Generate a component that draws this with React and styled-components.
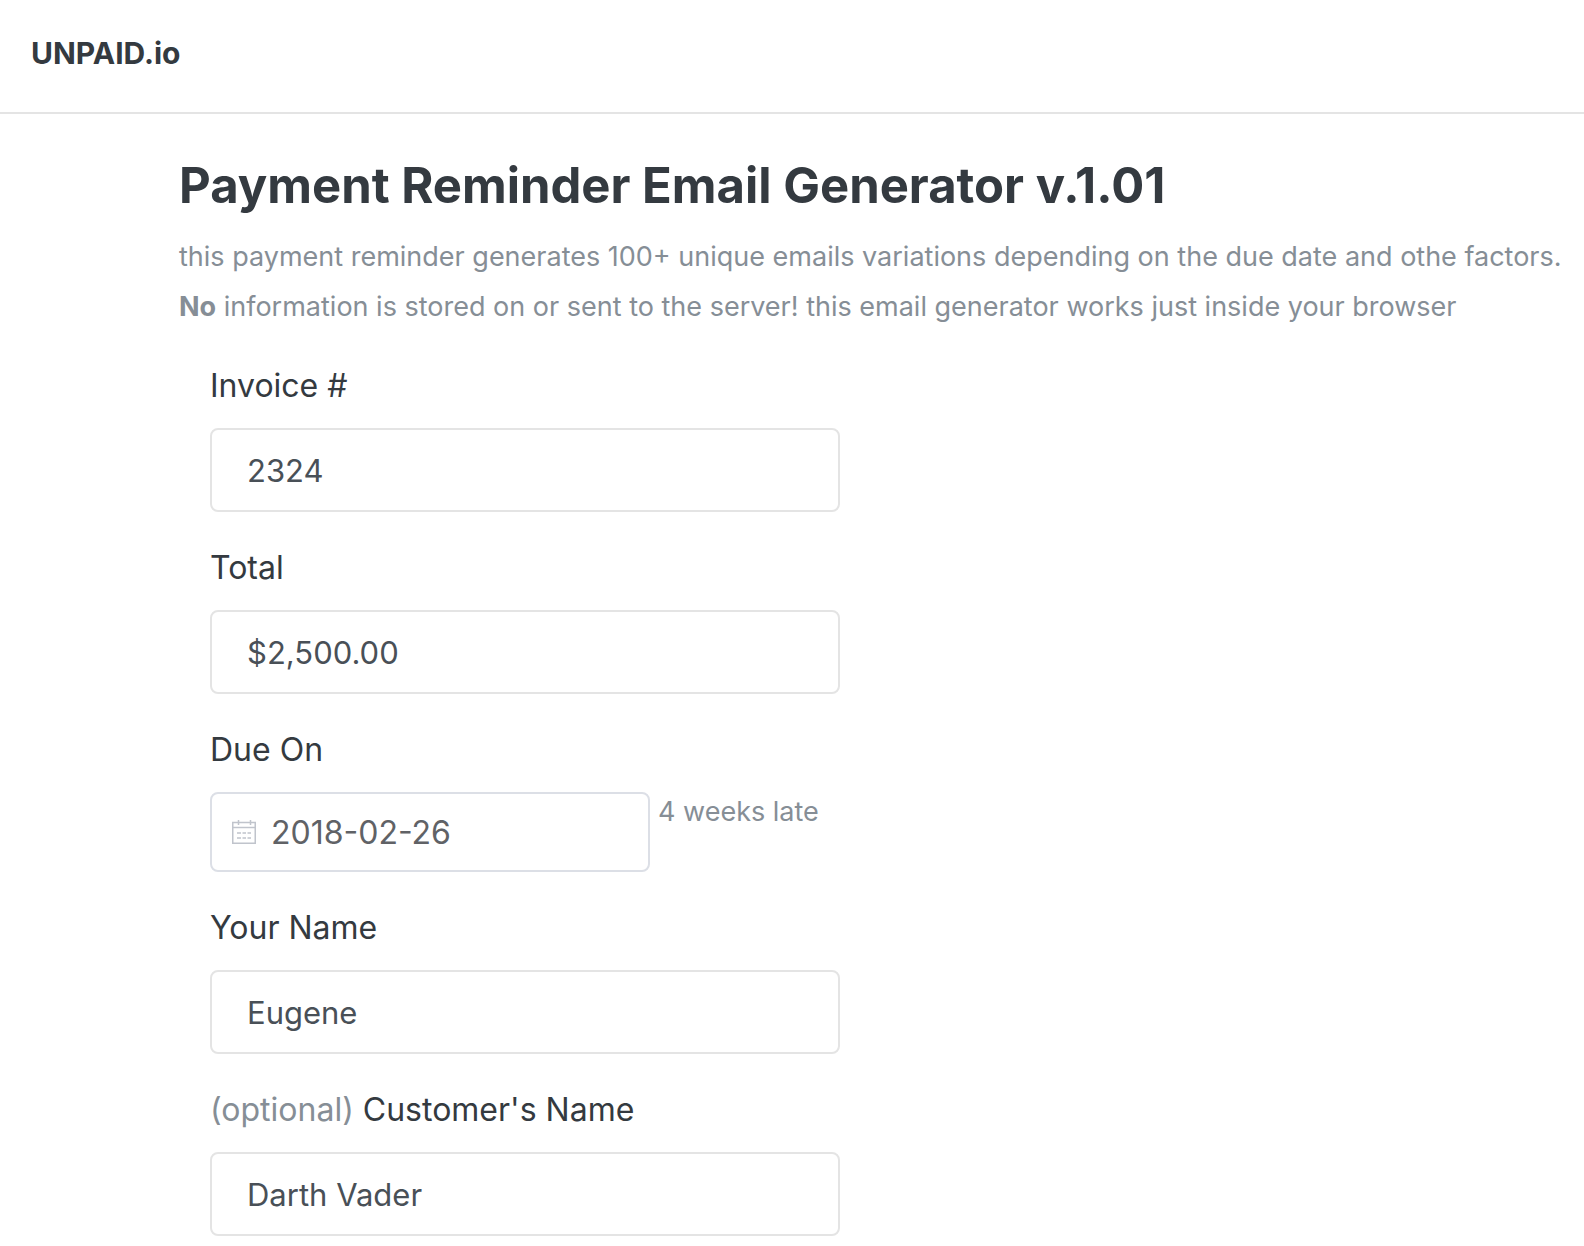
import React, { useState } from "react";
import styled, { createGlobalStyle } from "styled-components";

const App = () => {
  const [form, setForm] = useState({
    invoice: "2324",
    total: "$2,500.00",
    dueOn: "2018-02-26",
    name: "Eugene",
    customer: "Darth Vader",
  });

  const handleChange = (e) => {
    setForm({ ...form, [e.target.name]: e.target.value });
  };

  return (
    <>
      <GlobalStyle />
      <StyledHeader>
        <StyledBrand href="#">UNPAID.io</StyledBrand>
      </StyledHeader>
      <StyledMain>
        <StyledTitle>Payment Reminder Email Generator v.1.01</StyledTitle>
        <StyledIntro>
          this payment reminder generates 100+ unique emails variations
          depending on the due date and othe factors.
          <br />
          <strong>No</strong> information is stored on or sent to the server!
          this email generator works just inside your browser
        </StyledIntro>

        <StyledForm onSubmit={(e) => e.preventDefault()}>
          <Field
            label="Invoice #"
            name="invoice"
            value={form.invoice}
            onChange={handleChange}
          />
          <Field
            label="Total"
            name="total"
            value={form.total}
            onChange={handleChange}
          />
          <StyledField>
            <StyledLabel htmlFor="dueOn">Due On</StyledLabel>
            <StyledDateRow>
              <StyledDateBox>
                <CalendarIcon />
                <StyledDateInput
                  id="dueOn"
                  name="dueOn"
                  value={form.dueOn}
                  onChange={handleChange}
                />
              </StyledDateBox>
              <StyledHint>4 weeks late</StyledHint>
            </StyledDateRow>
          </StyledField>
          <Field
            label="Your Name"
            name="name"
            value={form.name}
            onChange={handleChange}
          />
          <Field
            optional
            label="Customer's Name"
            name="customer"
            value={form.customer}
            onChange={handleChange}
          />
        </StyledForm>
      </StyledMain>
    </>
  );
};

export default App;

var Field = ({ label, name, value, onChange, optional }) => {
  return (
    <StyledField>
      <StyledLabel htmlFor={name}>
        {optional && <span>(optional) </span>}
        {label}
      </StyledLabel>
      <StyledInput id={name} name={name} value={value} onChange={onChange} />
    </StyledField>
  );
};

var CalendarIcon = () => {
  return (
    <StyledIcon viewBox="0 0 26 26" fill="none" aria-hidden="true">
      <path d="M1.75 3.5H24.25V24.25H1.75Z" stroke="#c0c4cc" strokeWidth="1.5" />
      <path d="M1 8.5H25" stroke="#c0c4cc" strokeWidth="1.5" />
      <path d="M7.5 1V6M19.5 1V6" stroke="#c0c4cc" strokeWidth="1.5" />
      <path
        d="M6 14H10M11.5 14H15M16.5 14H20M6 19H10M11.5 19H15M16.5 19H20"
        stroke="#c0c4cc"
        strokeWidth="1.5"
      />
    </StyledIcon>
  );
};

const GlobalStyle = createGlobalStyle`
  * {
    box-sizing: border-box;
  }

  body {
    margin: 0;
    background-color: #fff;
    color: #343a40;
    font-family: Inter, "Liberation Sans", sans-serif;
  }

  input {
    font-family: inherit;
  }
`;

const StyledHeader = styled.header`
  display: flex;
  align-items: center;
  padding: 27px 31px 33px;
  border-bottom: 2px solid #e4e4e4;
`;

const StyledBrand = styled.a`
  color: #343a40;
  font-size: 30px;
  font-weight: 700;
  line-height: 52px;
  text-decoration: none;
`;

const StyledMain = styled.main`
  padding: 37px 10px 10px 179px;
`;

const StyledTitle = styled.h1`
  margin: 0;
  font-size: 49px;
  font-weight: 700;
  line-height: 70px;
`;

const StyledIntro = styled.p`
  margin: 11px 0 28px;
  color: #868e96;
  font-size: 27px;
  line-height: 50px;

  strong {
    font-weight: 700;
  }
`;

const StyledForm = styled.form`
  display: flex;
  flex-direction: column;
  gap: 30px;
  max-width: 661px;
  padding-left: 31px;
`;

const StyledField = styled.div`
  display: flex;
  flex-direction: column;
  gap: 16px;
`;

const StyledLabel = styled.label`
  font-size: 32px;
  line-height: 52px;

  span {
    color: #868e96;
  }
`;

const StyledInput = styled.input`
  width: 100%;
  height: 84px;
  padding: 0 35px;
  border: 2px solid #e4e4e4;
  border-radius: 8px;
  background-color: #fff;
  color: #495057;
  font-size: 31px;
`;

const StyledDateRow = styled.div`
  display: flex;
  align-items: flex-start;
  gap: 8px;
`;

const StyledDateBox = styled.div`
  display: flex;
  align-items: center;
  gap: 14px;
  width: 440px;
  height: 80px;
  padding: 0 19px;
  border: 2px solid #dcdfe6;
  border-radius: 8px;
`;

const StyledDateInput = styled.input`
  flex: 1;
  min-width: 0;
  padding: 0;
  border: none;
  outline: none;
  background: none;
  color: #606266;
  font-size: 32px;
`;

const StyledHint = styled.span`
  color: #868e96;
  font-size: 27px;
  line-height: 40px;
  white-space: nowrap;
`;

const StyledIcon = styled.svg`
  flex: none;
  width: 26px;
  height: 26px;
`;
